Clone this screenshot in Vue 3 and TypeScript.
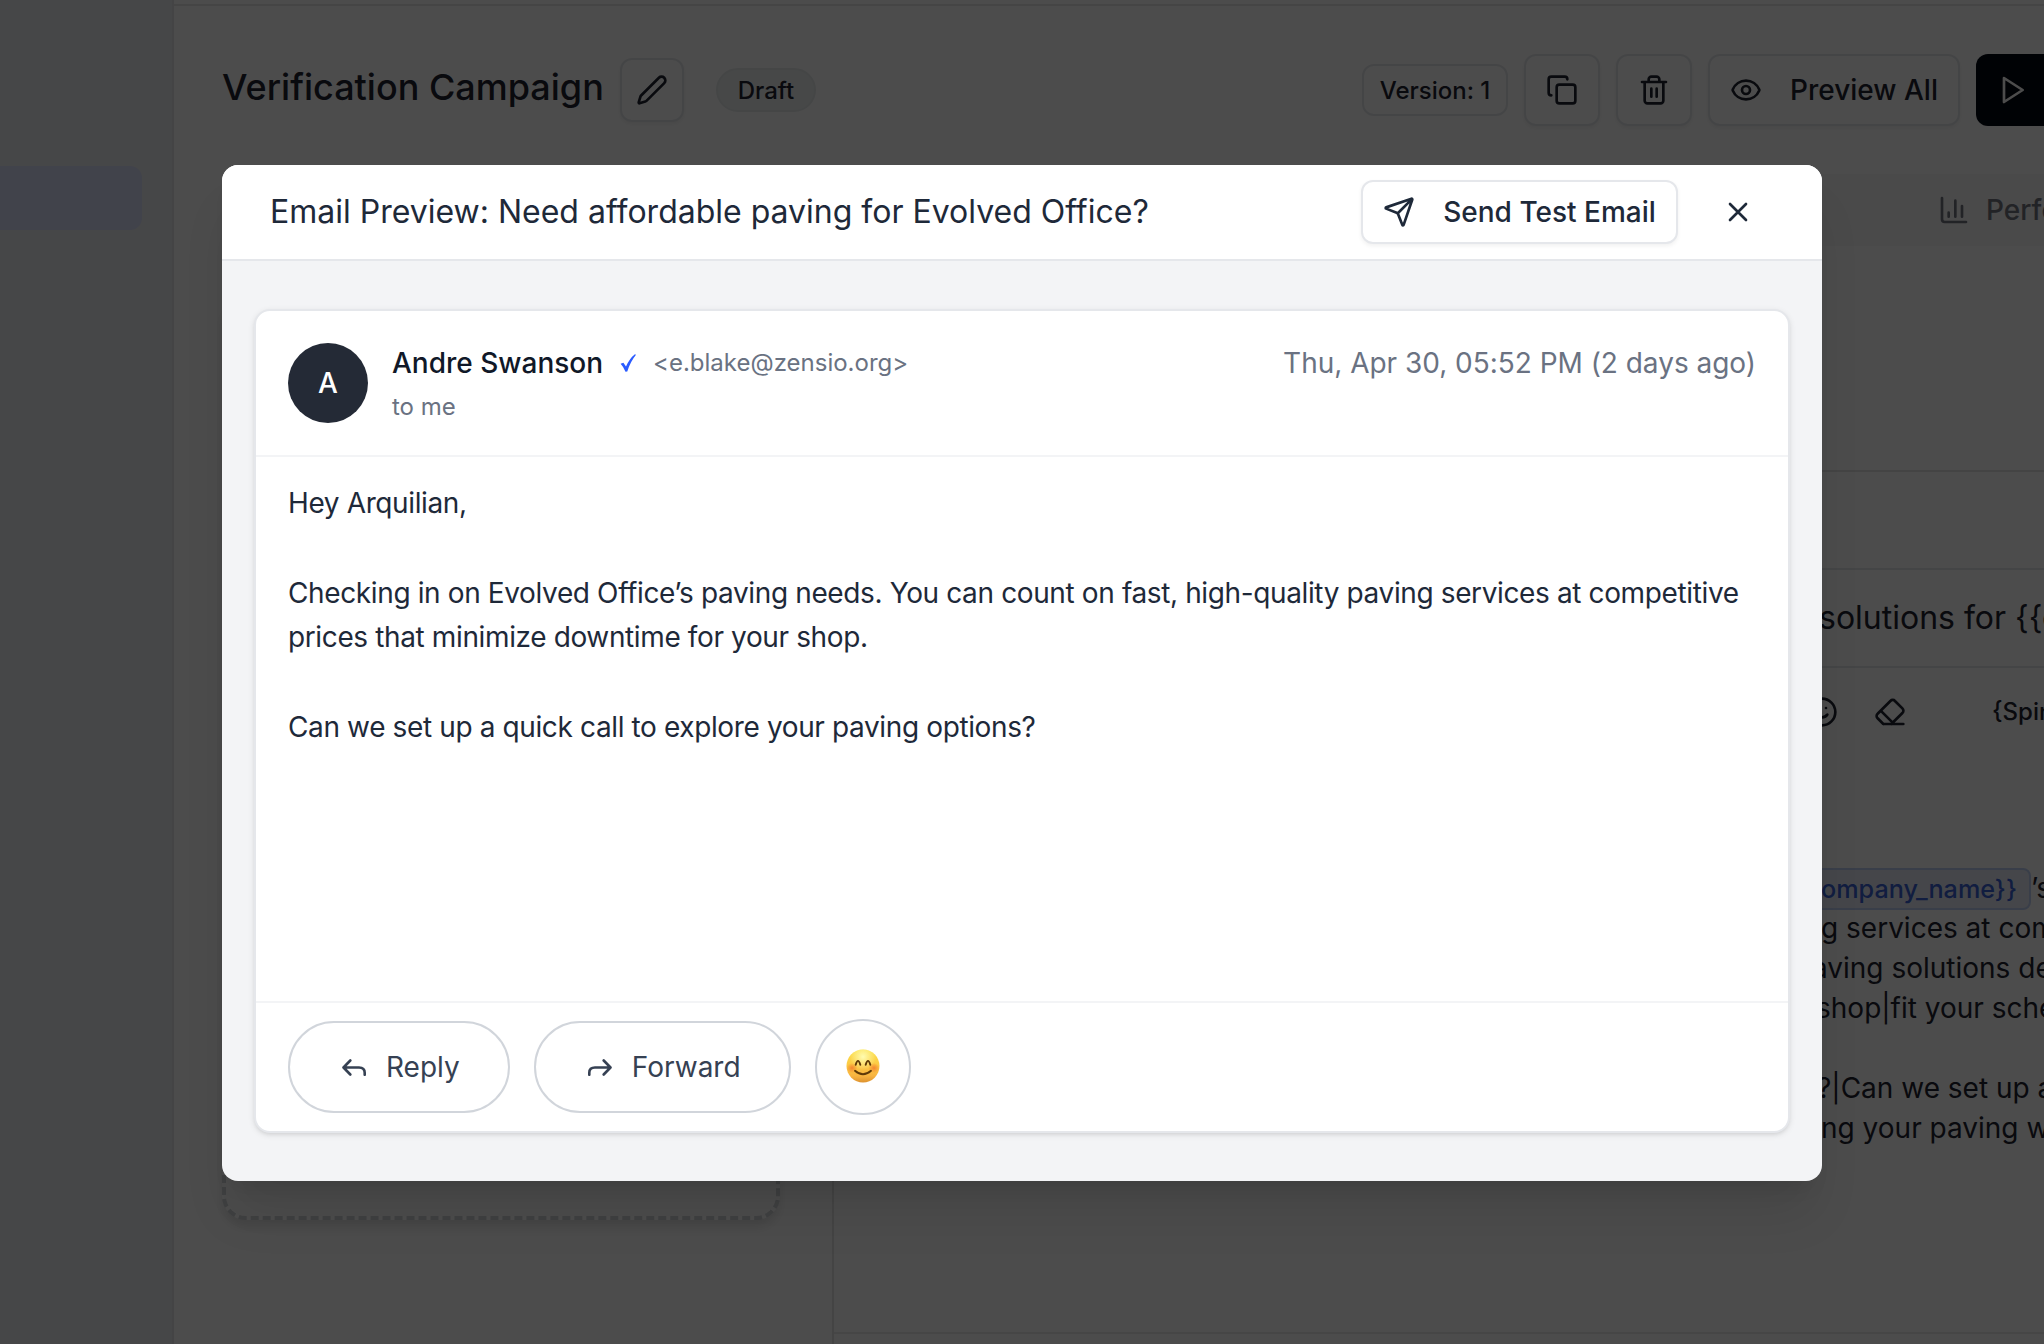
<script setup lang="ts">
interface EditorLine {
  text: string
  indent: number
}

const editorLines: EditorLine[] = [
  { text: 'g services at competitive', indent: -1 },
  { text: 'aving solutions designed', indent: -10 },
  { text: 'shop|fit your schedule', indent: -6 },
  { text: '', indent: 0 },
  { text: '?|Can we set up a quick', indent: -5 },
  { text: 'ng your paving work', indent: -1 },
]

const paragraphs: string[] = [
  'Hey Arquilian,',
  'Checking in on Evolved Office’s paving needs. You can count on fast, high-quality paving services at competitive prices that minimize downtime for your shop.',
  'Can we set up a quick call to explore your paving options?',
]

const subject = 'solutions for {{company_name}}'
const variableTag = 'ompany_name}}'
const spinLabel = '{Spintax}'
const senderAddress = '<e.blake@zensio.org>'
</script>

<template>
  <div class="screen">
    <div class="page">
      <aside class="sidebar"><div class="nav-active"></div></aside>
      <main class="main">
        <div class="topline"></div>
        <header class="toolbar">
          <h1>Verification Campaign</h1>
          <button class="btn square edit">
            <svg class="icon" viewBox="0 0 24 24"><path d="M21.174 6.812a1 1 0 0 0-3.986-3.987L3.842 16.174a2 2 0 0 0-.5.83l-1.321 4.352a.5.5 0 0 0 .623.622l4.353-1.32a2 2 0 0 0 .83-.497z" /></svg>
          </button>
          <span class="draft">Draft</span>
          <div class="actions">
            <span class="version">Version: 1</span>
            <button class="btn tool">
              <svg class="icon" viewBox="0 0 24 24"><rect x="8" y="8" width="14" height="14" rx="2" /><path d="M4 16c-1.1 0-2-.9-2-2V4c0-1.1.9-2 2-2h10c1.1 0 2 .9 2 2" /></svg>
            </button>
            <button class="btn tool">
              <svg class="icon" viewBox="0 0 24 24"><path d="M3 6h18M19 6v14c0 1-1 2-2 2H7c-1 0-2-1-2-2V6M8 6V4c0-1 1-2 2-2h4c1 0 2 1 2 2v2M10 11v6M14 11v6" /></svg>
            </button>
            <button class="btn preview">
              <svg class="icon" viewBox="0 0 24 24"><path d="M2.062 12.348a1 1 0 0 1 0-.696 10.75 10.75 0 0 1 19.876 0 1 1 0 0 1 0 .696 10.75 10.75 0 0 1-19.876 0" /><circle cx="12" cy="12" r="3" /></svg>
              <span>Preview All</span>
            </button>
            <button class="start">
              <svg class="icon" viewBox="0 0 24 24"><path d="M6 3l14 9-14 9z" /></svg>
            </button>
          </div>
        </header>
        <nav class="tabs">
          <svg class="icon" viewBox="0 0 24 24"><path d="M3 3v16a2 2 0 0 0 2 2h16M18 17V9M13 17V5M8 17v-3" /></svg>
          <span>Performance</span>
        </nav>
        <div class="columns">
          <section class="steps"><div class="add-step"></div></section>
          <section class="editor">
            <div class="editor-row"></div>
            <div class="editor-row subject">{{ subject }}</div>
            <div class="editor-tools">
              <svg class="icon" viewBox="0 0 24 24"><circle cx="12" cy="12" r="10" /><path d="M8 14s1.5 2 4 2 4-2 4-2M9 9h.01M15 9h.01" /></svg>
              <svg class="icon" viewBox="0 0 24 24"><path d="m7 21-4.300-4.300c-1-1-1-2.500 0-3.400l9.600-9.600c1-1 2.500-1 3.400 0l5.600 5.600c1 1 1 2.500 0 3.400L13 21M22 21H7M5 11l9 9" /></svg>
              <span>{{ spinLabel }}</span>
            </div>
            <div class="editor-body">
              <div class="line"><span class="tag">{{ variableTag }}</span><span>’s</span></div>
              <div v-for="(line, i) in editorLines" :key="i" class="line" :style="{ marginLeft: line.indent + 'px' }">{{ line.text }}</div>
            </div>
            <div class="editor-foot"></div>
          </section>
        </div>
      </main>
    </div>

    <div class="overlay">
      <div class="modal">
        <header class="modal-head">
          <h2>Email Preview: Need affordable paving for Evolved Office?</h2>
          <button class="btn send">
            <svg class="icon" viewBox="0 0 24 24"><path d="M14.536 21.686a.5.5 0 0 0 .937-.024l6.500-19a.496.496 0 0 0-.635-.635l-19 6.500a.5.5 0 0 0-.024.937l7.930 3.180a2 2 0 0 1 1.112 1.110zM21.854 2.147l-10.940 10.939" /></svg>
            <span>Send Test Email</span>
          </button>
          <button class="close">
            <svg class="icon" viewBox="0 0 24 24"><path d="M18 6 6 18M6 6l12 12" /></svg>
          </button>
        </header>
        <div class="modal-body">
          <article class="card">
            <header class="mail-head">
              <div class="avatar">A</div>
              <div class="who">
                <div class="from">
                  <span class="name">Andre Swanson</span>
                  <svg class="check" viewBox="0 0 16 18"><path d="M0.600 9.700L3.400 8.700L6 12.600Q9.500 4.500 14.900 0.300L16 0.800Q10.500 7.500 7.300 17.400L5.500 17.800Q3.800 13 0.600 9.700Z" /></svg>
                  <span class="address">{{ senderAddress }}</span>
                </div>
                <div class="to">to me</div>
              </div>
              <time>Thu, Apr 30, 05:52 PM (2 days ago)</time>
            </header>
            <div class="mail-text">
              <p v-for="(p, i) in paragraphs" :key="i">{{ p }}</p>
            </div>
            <footer class="mail-foot">
              <button class="pill">
                <svg class="arrow" viewBox="0 0 24 17"><path d="M8.300 1.500L1.500 8.500L8.300 15.500M2 8.500H17Q22.700 8.500 22.700 13.800V15.800" /></svg>
                <span>Reply</span>
              </button>
              <button class="pill">
                <svg class="arrow" viewBox="0 0 24 17"><path d="M15.700 1.500L22.500 8.500L15.700 15.500M22 8.500H7Q1.300 8.500 1.300 13.800V15.800" /></svg>
                <span>Forward</span>
              </button>
              <button class="round">
                <svg class="emoji" viewBox="0 0 34 34">
                  <defs>
                    <linearGradient id="face" x1="0" y1="0" x2="0" y2="1">
                      <stop offset="0" stop-color="#fbe04a" />
                      <stop offset="0.450" stop-color="#fccb45" />
                      <stop offset="0.800" stop-color="#f8b440" />
                      <stop offset="1" stop-color="#dd922f" />
                    </linearGradient>
                    <radialGradient id="shine" cx="0.500" cy="0.220" r="0.400">
                      <stop offset="0" stop-color="#fffcb0" />
                      <stop offset="1" stop-color="#fffcb0" stop-opacity="0" />
                    </radialGradient>
                    <radialGradient id="blush">
                      <stop offset="0" stop-color="#f47b2c" stop-opacity="0.850" />
                      <stop offset="1" stop-color="#f47b2c" stop-opacity="0" />
                    </radialGradient>
                  </defs>
                  <circle cx="17" cy="17" r="16.500" fill="url(#face)" />
                  <circle cx="17" cy="17" r="16.500" fill="url(#shine)" />
                  <ellipse cx="6" cy="19" rx="5.500" ry="5" fill="url(#blush)" />
                  <ellipse cx="28" cy="19" rx="5.500" ry="5" fill="url(#blush)" />
                  <path d="M9.700 15.800Q12 8 14.300 15.800M19.700 15.800Q22 8 24.300 15.800" fill="none" stroke="#5f3a08" stroke-width="1.900" stroke-linecap="round" />
                  <path d="M9 21.800Q17 28.800 25 21.800" fill="none" stroke="#5f3a08" stroke-width="1.900" stroke-linecap="round" />
                </svg>
              </button>
            </footer>
          </article>
        </div>
      </div>
    </div>
  </div>
</template>

<style>
body { overflow: hidden; }
</style>

<style scoped>
.screen {
  position: relative;
  width: 2044px;
  height: 1344px;
  overflow: hidden;
  font-family: Inter, sans-serif;
  font-size: 28px;
  color: #1e2939;
}
.screen * { box-sizing: border-box; }
button { font: inherit; color: inherit; background: none; border: 0; padding: 0; margin: 0; }
h1, h2, p { margin: 0; }
.icon {
  width: 32px;
  height: 32px;
  flex: none;
  fill: none;
  stroke: currentColor;
  stroke-width: 2;
  stroke-linecap: round;
  stroke-linejoin: round;
}
.page { display: flex; width: 100%; height: 100%; background: #fff; color: #1e2330; }
.sidebar { width: 174px; flex: none; background: #ecedf0; border-right: 2px solid #e3e5e8; padding-top: 166px; }
.nav-active { width: 142px; height: 64px; background: #d9e0fc; border-radius: 0 12px 12px 0; }
.main { width: 1870px; flex: none; display: flex; flex-direction: column; overflow: hidden; }
.topline { height: 6px; flex: none; border-bottom: 2px solid #e8e8e8; }
.toolbar { height: 168px; flex: none; display: flex; align-items: center; padding-left: 48px; }
h1 { flex: none; font-size: 36px; line-height: 44px; font-weight: 500; width: 398px; margin-top: -6px; white-space: nowrap; }
.btn {
  display: flex;
  align-items: center;
  justify-content: center;
  flex: none;
  border: 2px solid #e5e7eb;
  border-radius: 12px;
  background: #fff;
  box-shadow: 0 2px 4px rgba(0, 0, 0, 0.06);
  font-weight: 500;
  white-space: nowrap;
}
.square { width: 64px; height: 64px; }
.draft {
  flex: none;
  margin-left: 32px;
  width: 100px;
  height: 44px;
  display: flex;
  align-items: center;
  justify-content: center;
  border-radius: 22px;
  background: #edf2f1;
  border: 2px solid #e6ebec;
  font-size: 24px;
  font-weight: 500;
}
.actions { display: flex; align-items: center; gap: 16px; margin-left: 546px; flex: none; }
.version {
  width: 146px;
  height: 52px;
  display: flex;
  align-items: center;
  justify-content: center;
  border: 2px solid #e5e7eb;
  border-radius: 12px;
  font-size: 24px;
  font-weight: 500;
  white-space: nowrap;
}
.tool { width: 76px; height: 72px; }
.preview { width: 252px; height: 72px; gap: 28px; justify-content: flex-start; padding-left: 20px; }
.start { width: 220px; height: 72px; border-radius: 12px; background: #030712; color: #fff; display: flex; align-items: center; padding-left: 20px; flex: none; }
.tabs {
  height: 72px;
  flex: none;
  margin-left: 48px;
  padding-left: 1716px;
  display: flex;
  align-items: center;
  gap: 16px;
  background: #f7f7f8;
  color: #737680;
  font-weight: 500;
}
.columns { flex: 1; display: flex; }
.steps { width: 658px; padding: 48px 0 0 48px; flex: none; }
.add-step {
  width: 558px;
  height: 926px;
  border: 4px dashed #d3d6da;
  border-radius: 24px;
  background: #fff;
  box-shadow: 0 8px 12px -2px rgba(0, 0, 0, 0.12);
}
.editor { flex: none; width: 1212px; margin-top: 224px; border-left: 2px solid #e5e5e5; border-top: 2px solid #e5e5e5; display: flex; flex-direction: column; }
.editor-row { height: 98px; flex: none; border-bottom: 2px solid #e5e7eb; padding-left: 985px; white-space: nowrap; }
.subject { font-size: 32px; line-height: 96px; }
.editor-tools { height: 88px; flex: none; display: flex; align-items: center; padding-left: 972px; font-size: 24px; font-weight: 500; }
.editor-tools .icon + .icon { margin-left: 36px; }
.editor-tools span { margin-left: 86px; margin-top: -1px; }
.editor-body { flex: 1; padding: 112px 0 0 988px; }
.line { height: 40px; line-height: 40px; white-space: pre; }
.tag {
  display: inline-block;
  height: 42px;
  line-height: 38px;
  padding: 0 12px 0 10px;
  margin-left: -13px;
  border: 2px solid #bfd0f5;
  border-radius: 8px;
  background: #e6ecf8;
  color: #3b62d6;
  font-size: 25.2px;
  font-weight: 500;
  vertical-align: top;
}
.editor-foot { height: 12px; flex: none; border-top: 2px solid #e9e9eb; }
.overlay {
  position: absolute;
  inset: 0;
  display: flex;
  justify-content: center;
  align-items: flex-start;
  padding-top: 165px;
  background: rgba(0, 0, 0, 0.7);
}
.modal {
  width: 1600px;
  height: 1016px;
  border-radius: 16px;
  overflow: hidden;
  background: #f3f4f6;
  display: flex;
  flex-direction: column;
  box-shadow: 0 40px 50px -10px rgba(0, 0, 0, 0.1), 0 16px 20px -12px rgba(0, 0, 0, 0.1);
}
.modal-head { height: 96px; flex: none; background: #fff; border-bottom: 2px solid #e5e7eb; display: flex; align-items: center; padding: 0 68px 0 48px; }
h2 { flex: 1; font-size: 32px; font-weight: 400; white-space: nowrap; margin-top: -2px; }
.send { width: 317px; height: 64px; gap: 28px; }
.close { margin-left: 44px; width: 32px; height: 32px; display: flex; flex: none; }
.modal-body { flex: 1; padding: 48px 32px; display: flex; }
.card {
  flex: 1;
  background: #fff;
  border: 2px solid #e5e7eb;
  border-radius: 16px;
  box-shadow: 0 2px 6px rgba(0, 0, 0, 0.1), 0 2px 4px -2px rgba(0, 0, 0, 0.1);
  display: flex;
  flex-direction: column;
}
.mail-head { height: 146px; flex: none; border-bottom: 2px solid #f3f4f6; padding: 32px; display: flex; }
.avatar { width: 80px; height: 80px; border-radius: 50%; background: #242a36; color: #fff; display: flex; align-items: center; justify-content: center; font-weight: 500; }
.who { margin-left: 24px; flex: 1; }
.from { display: flex; align-items: center; height: 40px; }
.name { font-weight: 500; color: #101828; }
.check { width: 16px; height: 18px; margin-left: 17px; margin-top: -1px; fill: #2b5cff; }
.address { margin-left: 17px; margin-top: -2px; font-size: 24px; color: #6a7282; }
.to { margin-top: 8px; font-size: 24px; line-height: 32px; color: #6a7282; }
time { line-height: 40px; color: #6a7282; letter-spacing: -0.02px; }
.mail-text { flex: 1; padding: 24px 32px; line-height: 44.8px; letter-spacing: -0.375px; }
.mail-text p { margin-bottom: 44.8px; }
.mail-foot { height: 130px; flex: none; border-top: 2px solid #f3f4f6; padding: 0 32px; display: flex; align-items: center; gap: 24px; color: #364153; }
.pill { height: 92px; border: 2px solid #d1d5db; border-radius: 46px; padding: 0 48px 0 52px; display: flex; align-items: center; gap: 20px; }
.arrow { width: 24px; height: 17px; fill: none; stroke: currentColor; stroke-width: 2.600; stroke-linecap: round; stroke-linejoin: round; }
.round { width: 96px; height: 96px; border: 2px solid #d1d5db; border-radius: 50%; display: flex; align-items: center; justify-content: center; }
.emoji { width: 34px; height: 34px; margin-top: -2px; }
</style>
